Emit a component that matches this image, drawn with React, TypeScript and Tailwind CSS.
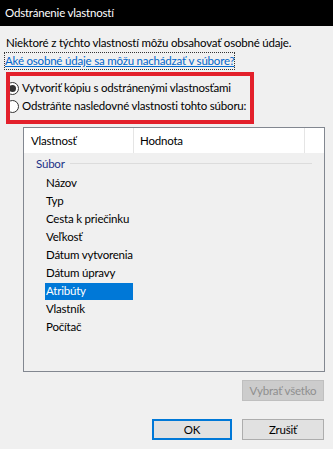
import React from "react";

const font = { fontFamily: 'Lato, "Noto Sans", sans-serif' };

function Radio({ checked }: { checked?: boolean }) {
  return (
    <span className="ml-[-4px] flex h-[13px] w-[13px] shrink-0 items-center justify-center rounded-full border border-[#333333] bg-white">
      {checked ? <span className="h-[7px] w-[7px] rounded-full bg-[#333333]" /> : null}
    </span>
  );
}

const items = [
  "Názov",
  "Typ",
  "Cesta k priečinku",
  "Veľkosť",
  "Dátum vytvorenia",
  "Dátum úpravy",
  "Atribúty",
  "Vlastník",
  "Počítač",
];

export default function App() {
  return (
    <div
      className="flex h-[449px] w-[333px] flex-col whitespace-nowrap bg-[#f0f0f0] text-[11.5px] tracking-[-0.2px] text-black"
      style={font}
    >
      <div className="flex h-[26px] shrink-0 items-center bg-black pl-[5px] text-white">
        Odstránenie vlastností
      </div>
      <div className="flex flex-col px-[6px] pt-[8px]">
        <div className="h-[18px] leading-[18px]">Niektoré z týchto vlastností môžu obsahovať osobné údaje.</div>
        <div className="flex h-[18px] items-center">
          <span className="-ml-[1px] leading-[16px] text-[#0066cc] underline outline-1 outline-dotted outline-[#333333]">
            Aké osobné údaje sa môžu nachádzať v súbore?
          </span>
        </div>
        <div className="mt-[2px] flex h-[52px] w-[248px] flex-col overflow-hidden border-4 border-[#e3202b] pt-[3px]">
          <div className="flex h-[18px] items-center gap-[3px]">
            <Radio checked />
            <span>Vytvoriť kópiu s odstránenými vlastnosťami</span>
          </div>
          <div className="flex h-[18px] items-center gap-[3px]">
            <Radio />
            <span>Odstráňte nasledovné vlastnosti tohto súboru:</span>
          </div>
        </div>
        <div className="ml-[17px] mt-[3px] flex h-[245px] w-[302px] flex-col border border-[#828790] bg-[#f0f0f0]">
          <div className="flex h-[25px] shrink-0 bg-white">
            <div className="flex w-[110px] items-center border-r border-[#e5e5e5] pl-[7px]">Vlastnosť</div>
            <div className="flex w-[171px] items-center border-r border-[#e5e5e5] pl-[6px]">Hodnota</div>
          </div>
          <div className="flex h-[21px] items-center pl-[12px] pr-[12px]">
            <span className="text-[#1e3287]">Súbor</span>
            <span className="ml-[5px] h-px flex-1 bg-[#dcdcdc]" />
          </div>
          {items.map((it) => (
            <div key={it} className="flex h-[18px] items-center pl-[21px]">
              <span
                className={
                  it === "Atribúty"
                    ? "flex h-[17px] w-[88px] items-center bg-[#0078d7] pl-[1px] text-white"
                    : "flex h-[17px] w-[88px] items-center pl-[1px]"
                }
              >
                {it}
              </span>
            </div>
          ))}
        </div>
        <div className="mt-[8px] flex justify-end pr-[3px]">
          <div className="flex h-[21px] w-[82px] items-center justify-center border border-[#bfbfbf] bg-[#cccccc] text-[#8f8f8f]">
            Vybrať všetko
          </div>
        </div>
        <div className="mt-[18px] flex justify-end gap-[10px] pr-[3px]">
          <div className="flex h-[21px] w-[80px] items-center justify-center border-2 border-[#0078d7] bg-[#e1e1e1]">
            OK
          </div>
          <div className="flex h-[21px] w-[82px] items-center justify-center border border-[#adadad] bg-[#e1e1e1]">
            Zrušiť
          </div>
        </div>
      </div>
    </div>
  );
}
